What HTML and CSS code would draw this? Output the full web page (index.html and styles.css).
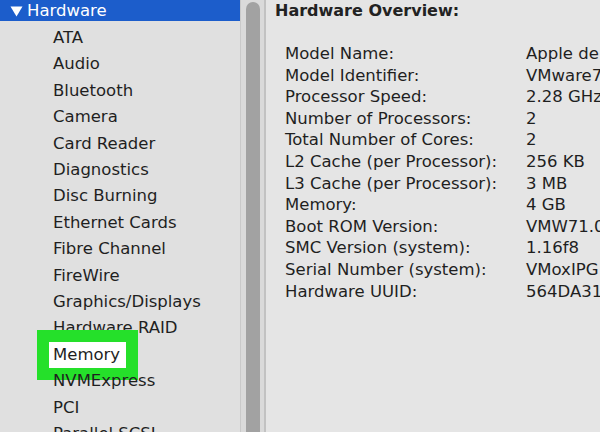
FILE: index.html
```html
<!DOCTYPE html>
<html>
<head>
<meta charset="utf-8">
<link rel="stylesheet" href="styles.css">
</head>
<body>
<div class="window">
  <nav class="sidebar">
    <div class="group-head">
      <svg class="disclosure" width="13" height="11" viewBox="0 0 13 11"><polygon points="0.5,0.5 12.5,0.5 6.5,10.5" fill="#ffffff"/></svg>
      <span>Hardware</span>
    </div>
    <ul class="items">
      <li>ATA</li>
      <li>Audio</li>
      <li>Bluetooth</li>
      <li>Camera</li>
      <li>Card Reader</li>
      <li>Diagnostics</li>
      <li>Disc Burning</li>
      <li>Ethernet Cards</li>
      <li>Fibre Channel</li>
      <li>FireWire</li>
      <li>Graphics/Displays</li>
      <li>Hardware RAID</li>
      <li><span class="highlight">Memory</span></li>
      <li>NVMExpress</li>
      <li>PCI</li>
      <li>Parallel SCSI</li>
    </ul>
  </nav>
  <div class="scrollbar"><div class="thumb"></div></div>
  <main class="detail">
    <h1 class="title">Hardware Overview:</h1>
    <dl class="specs">
      <dt>Model Name:</dt><dd>Apple de</dd>
      <dt>Model Identifier:</dt><dd>VMware7,1</dd>
      <dt>Processor Speed:</dt><dd>2.28 GHz</dd>
      <dt>Number of Processors:</dt><dd>2</dd>
      <dt>Total Number of Cores:</dt><dd>2</dd>
      <dt>L2 Cache (per Processor):</dt><dd>256 KB</dd>
      <dt>L3 Cache (per Processor):</dt><dd>3 MB</dd>
      <dt>Memory:</dt><dd>4 GB</dd>
      <dt>Boot ROM Version:</dt><dd>VMW71.0</dd>
      <dt>SMC Version (system):</dt><dd>1.16f8</dd>
      <dt>Serial Number (system):</dt><dd>VMoxIPG</dd>
      <dt>Hardware UUID:</dt><dd>564DA31</dd>
    </dl>
  </main>
</div>
</body>
</html>
```

FILE: styles.css
```css
html, body {
  margin: 0;
  padding: 0;
  width: 600px;
  height: 432px;
  overflow: hidden;
}
body {
  font-family: "DejaVu Sans", "Liberation Sans", sans-serif;
  color: #1f1f1f;
  background: #e4e4e4;
}
.window {
  display: flex;
  height: 432px;
  overflow: hidden;
}
.sidebar {
  width: 240px;
  flex: none;
  background: #e0e0e0;
  overflow: hidden;
}
.group-head {
  height: 21px;
  background: #1c5dcb;
  color: #ffffff;
  font-size: 16.5px;
  line-height: 20px;
  padding-top: 1px;
  box-sizing: border-box;
  display: flex;
  align-items: flex-start;
  padding-left: 10px;
}
.disclosure {
  margin-top: 5px;
  margin-right: 4px;
}
.items {
  list-style: none;
  margin: 4px 0 0 0;
  padding: 0 0 0 53px;
  font-size: 16.5px;
  line-height: 26.4px;
  white-space: nowrap;
}
.highlight {
  display: inline-block;
  margin-left: -4px;
  padding: 0 6px 0 4px;
  background: #ffffff;
  outline: 12px solid #25e02a;
}
.scrollbar {
  width: 26px;
  flex: none;
  box-sizing: border-box;
  background: #dadada;
  border-left: 1px solid #c9c9c9;
  border-right: 2px solid #c2c2c2;
  padding: 2px 4px 0 5px;
  display: flex;
}
.thumb {
  flex: 1;
  background: #a2a2a2;
  border-radius: 7px 7px 0 0;
}
.detail {
  flex: 1;
  min-width: 0;
  background: #e5e5e5;
  padding: 0 0 0 9px;
  overflow: hidden;
}
.title {
  margin: 0;
  padding-top: 1px;
  font-size: 16px;
  line-height: 20px;
  font-weight: bold;
  color: #222222;
}
.specs {
  display: grid;
  grid-template-columns: 241px auto;
  margin: 22px 0 0 10px;
  font-size: 16.5px;
  line-height: 21.6px;
  white-space: nowrap;
}
.specs dt, .specs dd {
  margin: 0;
}
```
